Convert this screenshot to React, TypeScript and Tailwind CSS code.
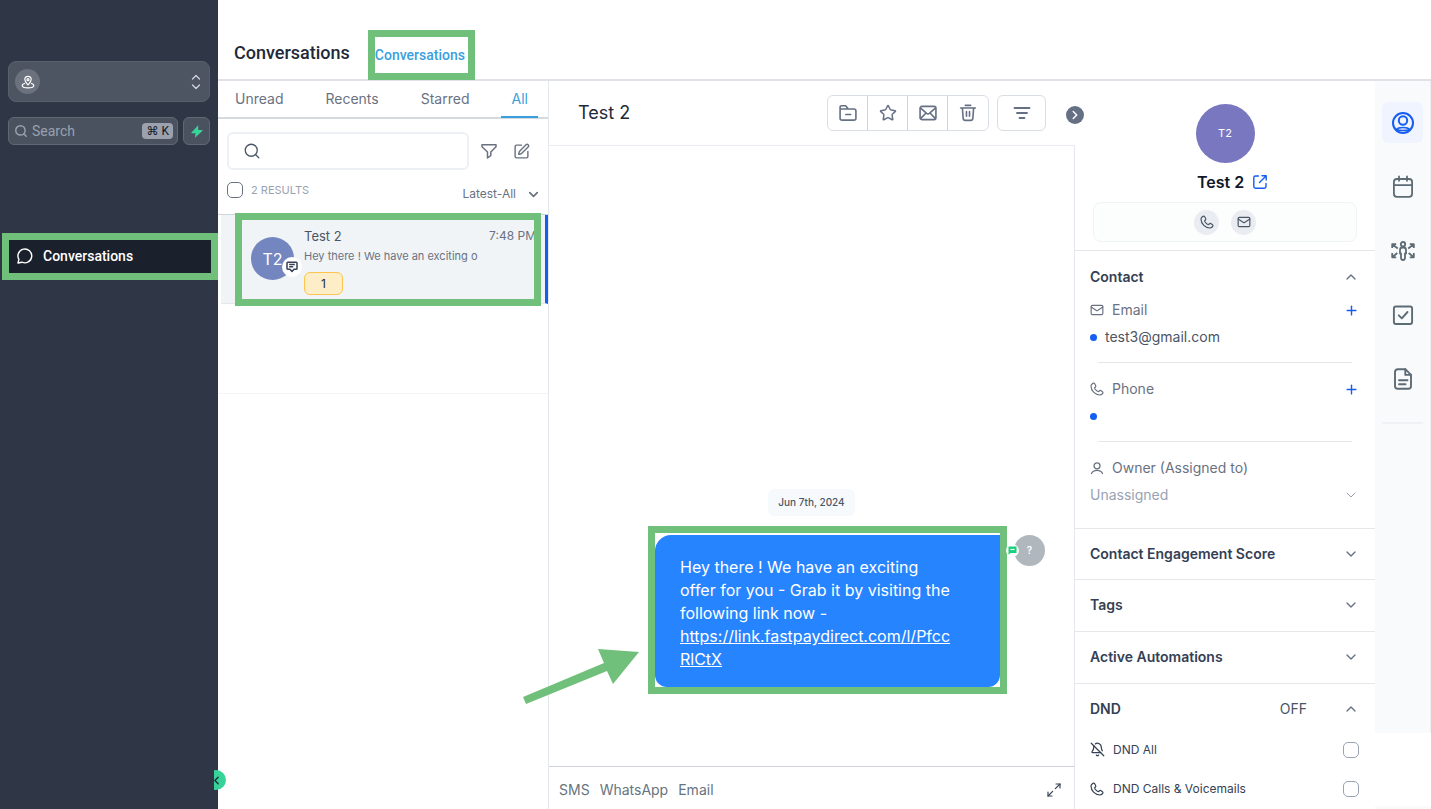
import type { ReactNode } from "react";
import {
  BellOff,
  ChevronDown,
  ChevronLeft,
  ChevronRight,
  ChevronUp,
  Mail,
  Maximize2,
  Plus,
  Search,
  SquarePen,
  Star,
} from "lucide-react";

const tabs = ["Unread", "Recents", "Starred", "All"];
const channels = ["SMS", "WhatsApp", "Email"];
const closedSections = ["Contact Engagement Score", "Tags", "Active Automations"];

function LocationIcon() {
  return (
    <svg width="14" height="14" viewBox="0 0 24 24" fill="none" stroke="currentColor" strokeWidth="2" strokeLinecap="round" strokeLinejoin="round">
      <path d="M12 17c-3-3.500-5.500-6-5.500-9.200a5.500 5.500 0 0 1 11 0C17.500 11 15 13.500 12 17z" />
      <circle cx="12" cy="8" r="1.800" />
      <path d="M6 14.500c-2.500.8-4 2-4 3.300C2 20.200 6.500 22 12 22s10-1.800 10-4.200c0-1.300-1.500-2.500-4-3.300" />
    </svg>
  );
}

function FolderIcon() {
  return (
    <svg width="18" height="18" viewBox="0 0 20 20" fill="none" stroke="currentColor" strokeWidth="1.800" strokeLinejoin="round" strokeLinecap="round">
      <path d="M1.200 5.500V3.500c0-1 .6-1.600 1.600-1.600h4.500l2.200 2.600v1M1.200 5.500h15.300c1.400 0 2.300.9 2.300 2.200v8c0 1.300-.9 2.200-2.300 2.200h-13c-1.400 0-2.300-.9-2.300-2.200z" />
      <path d="M7.500 11.700h5.500" />
    </svg>
  );
}

function EnvelopeIcon() {
  return (
    <svg width="18" height="18" viewBox="0 0 20 20" fill="none" stroke="currentColor" strokeWidth="1.800" strokeLinejoin="round" strokeLinecap="round">
      <rect x="1.200" y="2.700" width="17.600" height="14.600" rx="2" />
      <path d="M1.800 4.500 8.500 10.300c1 .8 2 .8 3 0l6.700-5.800M2 16l5.800-6M18 16l-5.800-6" />
    </svg>
  );
}

function TrashIcon() {
  return (
    <svg width="18" height="18" viewBox="0 0 20 20" fill="none" stroke="currentColor" strokeWidth="1.800" strokeLinejoin="round" strokeLinecap="round">
      <path d="M1.800 4.500h16.400M7 1.500h6M3.800 4.800l.8 11c.1 1.500.9 2.400 2.400 2.400h6c1.500 0 2.300-.9 2.400-2.400l.8-11M8.300 8.500v5M11.700 8.500v5" />
    </svg>
  );
}

function FilterLinesIcon() {
  return (
    <svg width="18" height="18" viewBox="0 0 18 18" fill="none" stroke="currentColor" strokeWidth="1.800" strokeLinecap="round">
      <path d="M1.500 4h15M4 9h10M6.500 14h5" />
    </svg>
  );
}

function FunnelIcon() {
  return (
    <svg width="16" height="16" viewBox="0 0 16 16" fill="none" stroke="currentColor" strokeWidth="1.500" strokeLinejoin="round">
      <path d="M1 1.800h14v1.900L9.800 9v3.600L6.500 15V9L1 3.700z" />
    </svg>
  );
}

function PhoneIcon() {
  return (
    <svg width="14" height="14" viewBox="0 0 14 14" fill="none" stroke="currentColor" strokeWidth="1.200" strokeLinejoin="round">
      <path d="M4 1.200C3 1 1 2.400 1 4c0 5 4.500 9 9 9 1.700 0 3-1.700 3-2.600 0-.6-2.200-2-2.800-2-.6 0-1.300 1.200-1.900 1.200C7.300 9.600 4.600 7 4.600 6.100c0-.6 1.200-1.200 1.200-1.900C5.800 3.500 4.600 1.300 4 1.200z" />
    </svg>
  );
}

function OwnerIcon() {
  return (
    <svg width="14" height="14" viewBox="0 0 14 14" fill="none" stroke="currentColor" strokeWidth="1.300" strokeLinecap="round">
      <circle cx="7" cy="4.800" r="3" />
      <path d="M1.500 12.500c1-2.500 3-3.200 5.500-3.200s4.500.7 5.500 3.200" />
    </svg>
  );
}

function ContactIcon() {
  return (
    <svg width="24" height="24" viewBox="0 0 24 24" fill="none" stroke="currentColor" strokeWidth="2">
      <circle cx="12" cy="12" r="10" />
      <circle cx="12" cy="9.500" r="4.200" />
      <path d="M5.500 18.500c1-1.400 2.600-2 6.500-2s5.500.6 6.500 2c-2 1-4 1-6.500 1s-4.500 0-6.500-1z" strokeWidth="1.600" />
    </svg>
  );
}

function CalendarIcon() {
  return (
    <svg width="24" height="24" viewBox="0 0 24 24" fill="none" stroke="currentColor" strokeWidth="1.800" strokeLinecap="round">
      <rect x="2.900" y="4" width="18.200" height="17.800" rx="3" />
      <path d="M3 10.200h18M8 1.500v4.300M16 1.500v4.300" />
    </svg>
  );
}

function PeopleArrowsIcon() {
  return (
    <svg width="24" height="20" viewBox="0 0 24 20" fill="none" stroke="currentColor" strokeWidth="1.800" strokeLinejoin="round">
      <path d="M1.200 7V3.200h4M1.500 3.500l5.300 4M1.200 12v4.300h4M1.500 16l4.800-4M22.800 7V3.200h-4M22.500 3.500l-5.300 4M22.800 12v4.300h-4M22.500 16l-4.800-4" />
      <circle cx="12" cy="3.200" r="2.200" />
      <path d="M9 9c0-1.500.9-2.500 2.300-2.500h1.400C14.100 6.500 15 7.500 15 9v3.500h-1v4.300c0 1.400-.8 2.200-2 2.200s-2-.8-2-2.200v-4.300H9z" />
    </svg>
  );
}

function TaskIcon() {
  return (
    <svg width="24" height="24" viewBox="0 0 24 24" fill="none" stroke="currentColor" strokeWidth="1.900" strokeLinecap="round" strokeLinejoin="round">
      <rect x="2.900" y="3.500" width="18.200" height="17.500" rx="2" />
      <path d="M7.800 12.300 10.800 15.300 16.500 9" />
    </svg>
  );
}

function DocumentIcon() {
  return (
    <svg width="24" height="24" viewBox="0 0 24 24" fill="none" stroke="currentColor" strokeWidth="1.900" strokeLinecap="round" strokeLinejoin="round">
      <path d="M14.300 2.200H6.800c-1.700 0-2.800 1.100-2.800 2.800v14c0 1.700 1.100 2.800 2.800 2.800h10.400c1.700 0 2.800-1.100 2.800-2.800V7.900z" />
      <path d="M14.300 2.200v5.700H20M8 13.200h8.500M8 17.200h6.500" />
    </svg>
  );
}

function OpenIcon() {
  return (
    <svg width="14" height="14" viewBox="0 0 14 14" fill="none" stroke="currentColor" strokeWidth="1.400" strokeLinecap="round" strokeLinejoin="round">
      <path d="M5.500 1H2.500C1.500 1 .8 1.700.8 2.700v8.800c0 1 .7 1.700 1.700 1.700h8.800c1 0 1.700-.7 1.700-1.700v-3M9 .8h4.200V5M13 1 6.500 7.500" />
    </svg>
  );
}

function Sidebar() {
  return (
    <aside className="relative flex w-[218px] shrink-0 flex-col bg-[#2f3747] pt-[61px] font-[Roboto,sans-serif]">
      <button aria-label="Switch location" className="mx-2 flex h-[41px] items-center justify-between rounded-lg border border-[#59606d] bg-[#4d5563] pr-2 pl-1.5 text-gray-300">
        <span className="flex size-[25px] items-center justify-center rounded-full bg-[#6b727e] text-white">
          <LocationIcon />
        </span>
        <svg width="10" height="16" viewBox="0 0 10 16" fill="none" stroke="currentColor" strokeWidth="1.300" strokeLinecap="round" strokeLinejoin="round">
          <path d="M1.500 5 5 1.500 8.500 5M1.500 11 5 14.500 8.500 11" />
        </svg>
      </button>
      <div className="mx-2 mt-[15px] flex gap-[5px]">
        <label className="flex h-7 min-w-0 flex-1 items-center rounded-md border border-[#616874] bg-[#4a5260] pr-1 pl-[5px] text-gray-400">
          <Search size={14} strokeWidth={2.5} />
          <input aria-label="Search" placeholder="Search" className="ml-1 min-w-0 flex-1 bg-transparent text-sm outline-none placeholder:text-gray-400" />
          <kbd className="rounded-sm bg-[#9ca1ae] px-1 font-[Roboto,'DejaVu_Sans',sans-serif] text-xs leading-4 text-gray-900">⌘ K</kbd>
        </label>
        <button aria-label="Quick actions" className="flex h-7 w-[27px] items-center justify-center rounded-md border border-[#616874] bg-[#4a5260]">
          <svg width="12" height="13" viewBox="0 0 12 13" fill="#37d399">
            <path d="M7.200.2.500 7.400c-.3.4-.1.800.4.800h3.600L4 12.800l7.300-6.700c.4-.4.200-1-.4-1H7.200z" />
          </svg>
        </button>
      </div>
      <nav className="mt-[88px] ml-0.5">
        <a href="#conversations" className="flex h-[47px] items-center gap-[10px] border-7 border-[#70c07b] bg-[#1a202c] pb-px pl-2 text-sm font-medium text-white">
          <svg width="16" height="16" viewBox="0 0 16 16" fill="none" stroke="currentColor" strokeWidth="1.400" strokeLinejoin="round">
            <path d="M1 15l.9-3.600A6.900 6.900 0 1 1 5 14.200z" />
          </svg>
          Conversations
        </a>
      </nav>
      <div className="absolute bottom-[19px] left-[214px] z-10 h-5 w-3 overflow-hidden">
        <button aria-label="Collapse menu" className="-ml-2 flex size-5 items-center justify-center rounded-full bg-[#37d399] text-gray-800">
          <ChevronLeft size={13} strokeWidth={2.5} />
        </button>
      </div>
    </aside>
  );
}

function TopBar() {
  return (
    <header className="flex h-[81px] shrink-0 items-end border-b-2 border-[#dfe3e8] pl-4 font-[Roboto,sans-serif]">
      <h1 className="mb-3 text-lg leading-7 font-medium text-gray-800">Conversations</h1>
      <a href="#conversations" className="-mb-px ml-[18px] flex h-[50px] items-center border-7 border-[#70c07b] pr-[3px] text-sm font-medium text-[#3a9fdc]">
        Conversations
      </a>
    </header>
  );
}

function ConversationItem() {
  return (
    <div className="relative ml-[3px] flex h-[89px] border-r-3 border-b border-r-[#155eef] border-b-gray-200 bg-[#f0f4f7] pl-[30px]">
      <div className="relative mt-[22px] flex size-[43px] shrink-0 items-center justify-center rounded-full bg-[#7486bf] text-base text-white">
        T2
        <span className="absolute -right-2 bottom-[3px] flex size-5 items-center justify-center rounded-full bg-white text-gray-700">
          <svg width="12" height="12" viewBox="0 0 12 12" fill="none" stroke="currentColor" strokeWidth="1.500" strokeLinejoin="round">
            <path d="M1.800 1.200h8.400c.5 0 .8.300.8.800v5.500c0 .5-.3.800-.8.800H8L6 10.500 4 8.300H1.800c-.5 0-.8-.3-.8-.8V2c0-.5.300-.8.800-.8zM3.200 3.600h5.600M3.200 5.800h4" />
          </svg>
        </span>
      </div>
      <div className="ml-[10px] min-w-0 flex-1 pt-[11px]">
        <div className="flex justify-between pr-[9px]">
          <p className="text-[13px] leading-5 text-gray-600">Test 2</p>
          <time className="text-xs leading-5 text-gray-500">7:48 PM</time>
        </div>
        <p className="text-[11px] leading-5 text-gray-500">Hey there ! We have an exciting o</p>
        <span className="mt-1.5 flex h-[23px] w-[39px] items-center justify-center rounded-md border border-[#fdc54f] bg-[#feeec7] text-xs text-gray-800">1</span>
      </div>
      <div className="pointer-events-none absolute -top-0.5 right-1 -bottom-[3px] left-[14px] border-7 border-[#70c07b]" />
    </div>
  );
}

function ConversationList() {
  return (
    <section className="flex w-[331px] shrink-0 flex-col border-r border-[#e4e7ec]">
      <div className="flex h-[38px] gap-[22px] border-b-2 border-[#d5d9e0] pl-[7px] text-sm text-gray-500">
        {tabs.map((tab) => (
          <button key={tab} className={tab === "All" ? "-mb-px border-b-2 border-[#3a9fdc] px-[10px] text-[#3a9fdc]" : "px-[10px]"}>
            {tab}
          </button>
        ))}
      </div>
      <div className="mt-[13px] flex items-center pl-[9px] text-gray-600">
        <label className="flex h-[38px] w-[242px] items-center rounded-md border-2 border-[#edf1f5] pl-[14px]">
          <Search size={18} strokeWidth={1.75} />
          <input aria-label="Search conversations" className="ml-2 min-w-0 flex-1 text-sm outline-none" />
        </label>
        <button aria-label="Filter" className="ml-3 text-gray-500">
          <FunnelIcon />
        </button>
        <button aria-label="Compose" className="ml-4 text-gray-500">
          <SquarePen size={17} strokeWidth={2} />
        </button>
      </div>
      <div className="flex h-11 justify-between pt-3 pr-[7px] pl-[9px]">
        <label className="flex h-4 items-center gap-2 text-[11px] text-gray-400">
          <input type="checkbox" className="size-4 appearance-none rounded-[5px] border border-gray-500" />2 RESULTS
        </label>
        <button className="flex h-6 items-center gap-[10px] text-xs text-gray-500">
          Latest-All
          <ChevronDown size={15} strokeWidth={2.75} />
        </button>
      </div>
      <div className="h-[180px] border-t border-b border-t-gray-300 border-b-gray-100">
        <ConversationItem />
      </div>
    </section>
  );
}

function ToolButton({ label, children }: { label: string; children: ReactNode }) {
  return (
    <button aria-label={label} className="flex h-[34px] w-10 items-center justify-center">
      {children}
    </button>
  );
}

function Chat() {
  return (
    <main className="flex min-w-0 flex-1 flex-col">
      <div className="flex h-[65px] shrink-0 items-center justify-between border-b border-[#e9ebf0] pl-[29px]">
        <h2 className="text-lg text-gray-800">Test 2</h2>
        <div className="relative flex gap-2 pr-[29px] text-[#667085]">
          <div className="flex divide-x divide-[#d0d5dd] rounded-md border border-[#d9dde4]">
            <ToolButton label="Archive"><FolderIcon /></ToolButton>
            <ToolButton label="Star"><Star size={18} strokeWidth={2} /></ToolButton>
            <ToolButton label="Mark unread"><EnvelopeIcon /></ToolButton>
            <ToolButton label="Delete"><TrashIcon /></ToolButton>
          </div>
          <button aria-label="Sort messages" className="flex w-[49px] items-center justify-center rounded-md border border-[#d9dde4]">
            <FilterLinesIcon />
          </button>
          <button aria-label="Hide contact panel" className="absolute top-[11px] -right-[9px] z-10 flex size-[18px] items-center justify-center rounded-full bg-[#667085] text-white">
            <ChevronRight size={14} strokeWidth={2.5} />
          </button>
        </div>
      </div>
      <div className="flex flex-1 flex-col justify-end border-r border-[#e4e7ec] pb-[72px]">
        <p className="mx-auto rounded-md bg-[#f7fafd] px-[10px] text-[10px] leading-[27px] font-medium text-gray-600">Jun 7th, 2024</p>
        <div className="mt-[10px] flex justify-end gap-[7px] pr-[29px]">
          <div className="relative w-[359px] border-7 border-[#70c07b] pt-0.5">
            <p className="rounded-t-2xl rounded-tr-none rounded-b-xl bg-[#2684ff] pt-[21px] pr-[46px] pb-4 pl-[25px] text-base leading-[23px] text-white">
              Hey there ! We have an exciting
              <br />
              offer for you - Grab it by visiting the
              <br />
              following link now -
              <br />
              <a href="#offer" className="underline">
                https://link.fastpaydirect.com/l/Pfcc
                <br />
                RlCtX
              </a>
            </p>
            <svg className="absolute top-[115px] -left-[132px]" width="116" height="58" viewBox="0 0 116 58" fill="#70c07b">
              <path d="M0 49 81 15 75 1 116 4 90 36 84 23 3 56z" />
            </svg>
          </div>
          <div className="relative mt-[9px] flex size-[31px] items-center justify-center rounded-full bg-[#b0b7bd] text-[10px] font-semibold text-white">
            ?
            <span className="absolute top-[9px] -left-2 flex size-[13px] items-center justify-center rounded-full bg-white">
              <svg width="9" height="9" viewBox="0 0 9 9">
                <path d="M.5.500h8v6.500h-6L.5 8.800z" fill="#18d17d" />
                <path d="M2.500 3.500h4" stroke="white" strokeWidth="1.200" />
              </svg>
            </span>
          </div>
        </div>
      </div>
      <div className="flex h-[43px] shrink-0 items-center gap-[10px] border-t border-r border-t-[#cfd3d9] border-r-[#e4e7ec] pt-1 pr-3 pl-[10px] text-sm text-[#66747e]">
        {channels.map((name) => (
          <button key={name}>{name}</button>
        ))}
        <button aria-label="Expand composer" className="ml-auto text-gray-700">
          <Maximize2 size={16} strokeWidth={1.75} />
        </button>
      </div>
    </main>
  );
}

function Field({ icon, label, children }: { icon: ReactNode; label: string; children?: ReactNode }) {
  return (
    <div className="h-[79px]">
      <div className="flex h-7 items-center text-sm text-gray-500">
        <span className="flex w-[22px]">{icon}</span>
        {label}
        <button aria-label={"Add " + label} className="ml-auto text-[#155eef]">
          <Plus size={15} strokeWidth={2.25} />
        </button>
      </div>
      <p className="flex h-[26px] items-center gap-2 text-sm text-gray-600">
        <span className="size-[7px] rounded-full bg-[#155eef]" />
        {children}
      </p>
      <div className="mt-3 mr-[7px] ml-2 border-t border-gray-200" />
    </div>
  );
}

function DndRow({ icon, label }: { icon: ReactNode; label: string }) {
  return (
    <label className="flex h-[39px] items-center text-xs text-gray-700">
      <span className="w-[23px]">{icon}</span>
      {label}
      <input type="checkbox" className="ml-auto size-4 appearance-none rounded-[5px] border border-[#98a2b3]" />
    </label>
  );
}

function ContactPanel() {
  return (
    <aside className="w-[300px] shrink-0 overflow-hidden text-[#344054]">
      <div className="flex h-[170px] flex-col items-center border-b border-gray-200 pt-[23px]">
        <div className="flex size-[59px] items-center justify-center rounded-full bg-[#7877bf] text-[11px] text-white">T2</div>
        <div className="mt-[7px] ml-[14px] flex h-6 items-center gap-[9px]">
          <h3 className="text-base font-semibold text-gray-900">Test 2</h3>
          <a href="#contact" aria-label="Open contact" className="text-[#155eef]">
            <OpenIcon />
          </a>
        </div>
        <div className="mx-[18px] mt-2 flex h-10 items-center justify-center gap-3 self-stretch rounded-lg border border-[#f0f3f3] bg-[#fcfdfd] text-gray-600">
          <button aria-label="Call" className="flex size-[25px] items-center justify-center rounded-full bg-[#e9ecf1]">
            <PhoneIcon />
          </button>
          <button aria-label="Send email" className="flex size-[25px] items-center justify-center rounded-full bg-[#e9ecf1]">
            <Mail size={14} strokeWidth={2} />
          </button>
        </div>
      </div>
      <div className="h-[278px] border-b border-gray-200 pr-4 pl-[15px]">
        <button className="flex h-[45px] w-full items-center justify-between pt-1.5 text-sm font-semibold">
          Contact
          <ChevronUp size={16} className="text-[#667085]" />
        </button>
        <Field icon={<Mail size={14} strokeWidth={2} />} label="Email">test3@gmail.com</Field>
        <Field icon={<PhoneIcon />} label="Phone" />
        <div className="flex h-7 items-center text-sm text-gray-500">
          <span className="w-[22px]">
            <OwnerIcon />
          </span>
          Owner (Assigned to)
        </div>
        <button className="flex h-[26px] w-full items-center justify-between text-sm text-[#98a2b3]">
          Unassigned
          <ChevronDown size={16} strokeWidth={1.5} />
        </button>
      </div>
      {closedSections.map((title, i) => (
        <button key={title} className={(i === 0 ? "h-[51px]" : "h-[52px]") + " flex w-full items-center justify-between border-b border-gray-200 pr-4 pb-px pl-[15px] text-sm font-semibold"}>
          {title}
          <ChevronDown size={16} className="text-[#667085]" />
        </button>
      ))}
      <div className="pr-4 pl-[15px]">
        <button className="flex h-[46px] w-full items-center pt-[3px] text-sm font-semibold">
          DND
          <span className="mr-9 ml-auto font-normal text-gray-600">OFF</span>
          <ChevronUp size={16} className="text-[#667085]" />
        </button>
        <DndRow icon={<BellOff size={15} strokeWidth={2} />} label="DND All" />
        <DndRow icon={<PhoneIcon />} label="DND Calls & Voicemails" />
      </div>
    </aside>
  );
}

function RailButton({ label, children }: { label: string; children: ReactNode }) {
  return (
    <button aria-label={label} className="flex size-[41px] items-center justify-center">
      {children}
    </button>
  );
}

function Rail() {
  return (
    <nav className="flex w-14 shrink-0 flex-col justify-between text-[#5d6b74]">
      <div className="flex h-[652px] flex-col items-center gap-[23px] border-r border-[#eef0f3] bg-[#f9fafc] pt-[21px]">
        <div className="rounded-md bg-[#eff4ff] text-[#155eef]">
          <RailButton label="Contact"><ContactIcon /></RailButton>
        </div>
        <RailButton label="Appointments"><CalendarIcon /></RailButton>
        <RailButton label="Opportunities"><PeopleArrowsIcon /></RailButton>
        <RailButton label="Tasks"><TaskIcon /></RailButton>
        <RailButton label="Documents"><DocumentIcon /></RailButton>
        <div className="w-[41px] border-t-2 border-[#eff1f4]" />
      </div>
      <div className="h-[3px] bg-[#f9fafc]" />
    </nav>
  );
}

export default function App() {
  return (
    <div className="flex h-screen min-w-[1100px] overflow-hidden bg-white font-[Inter,sans-serif]">
      <Sidebar />
      <div className="flex min-w-0 flex-1 flex-col">
        <TopBar />
        <div className="flex min-h-0 flex-1">
          <ConversationList />
          <Chat />
          <ContactPanel />
          <Rail />
        </div>
      </div>
    </div>
  );
}
